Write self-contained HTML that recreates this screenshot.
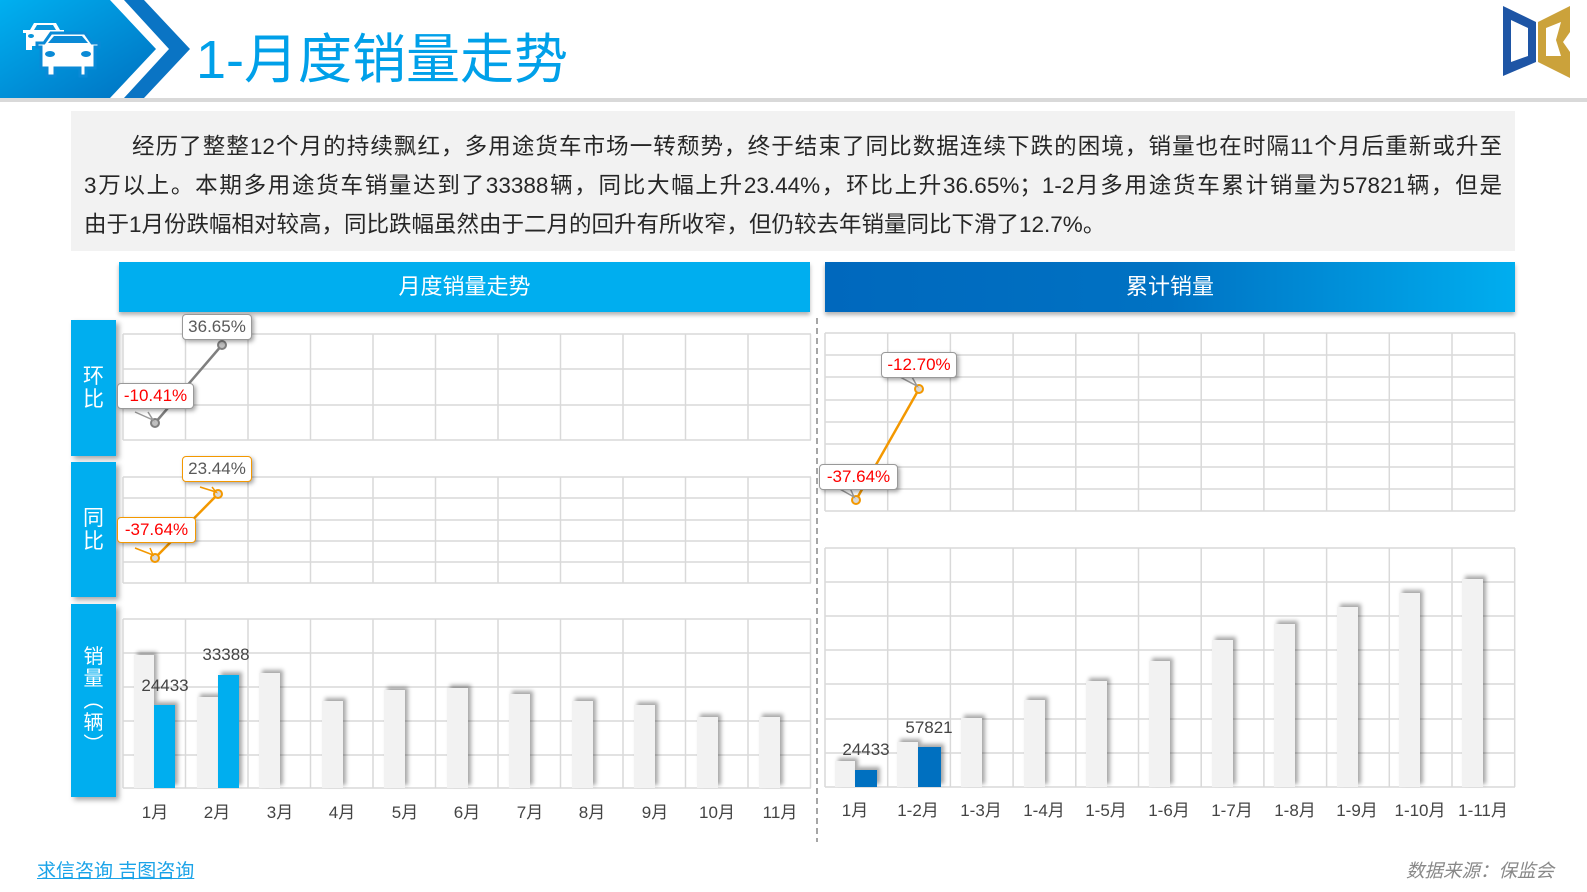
<!DOCTYPE html>
<html><head><meta charset="utf-8"><style>
*{margin:0;padding:0;box-sizing:border-box}
body{width:1587px;height:892px;background:#fff;position:relative;overflow:hidden;font-family:"Liberation Sans","Noto Sans CJK SC",sans-serif}
.a{position:absolute}
.para{position:absolute;left:71px;top:111px;width:1444px;height:140px;background:#f2f2f2}
.ln{position:absolute;font-size:22.5px;color:#262626;white-space:nowrap;line-height:30px}
.j{text-align:justify;text-align-last:justify}
.hd{position:absolute;top:262px;height:50px;color:#fff;font-size:22px;line-height:50px;text-align:center;box-shadow:0 3px 4px rgba(0,0,0,.3)}
.sb{position:absolute;left:71px;width:45px;background:#00aeef;color:#fff;font-size:21px;line-height:23px;text-align:center;box-shadow:3px 3px 5px rgba(0,0,0,.35);display:flex;align-items:center;justify-content:center}
.bar{position:absolute;box-shadow:3px -3px 4px rgba(0,0,0,.35)}
.g{background:#f2f2f2}
.lbl{position:absolute;font-size:17px;color:#444;transform:translateX(-50%);white-space:nowrap}
.co{position:absolute;background:#fff;border:1.5px solid #999;border-radius:4px;font-size:17px;line-height:24px;text-align:center;box-shadow:2px 2px 4px rgba(0,0,0,.35)}
</style></head><body>
<svg class="a" style="left:0;top:0" width="1587" height="105">
<defs><linearGradient id="hg" x1="0" y1="0" x2="1" y2="1"><stop offset="0" stop-color="#00b0f0"/><stop offset="1" stop-color="#0070c0"/></linearGradient></defs>
<rect x="0" y="98" width="1587" height="4" fill="#d9d9d9"/>
<polygon points="0,0 110,0 156,49 110,98 0,98" fill="url(#hg)"/>
<polygon points="124,0 144,0 190,49 144,98 124,98 169,49" fill="#0a74c4"/>
<!-- back car -->
<g fill="#fff">
<path d="M30,30 L34,23 H56 L60,30 H64 V33 H61 V50 H55 V46 H32 V50 H26 V33 H23 V30Z"/>
<path d="M34,30 L37,25 H53 L56,30Z" fill="#0994da"/>
<ellipse cx="31" cy="36" rx="3" ry="2" fill="#0994da"/>
</g>
<!-- front car -->
<g fill="#fff">
<path d="M44,43 L51,33 H85 L92,43 H99 V47 H95 V68 H86 V76 H80 V68 H55 V76 H47 V68 H41 V47 H37 V43Z" stroke="#0a8ad6" stroke-width="3"/>
<path d="M48,43 L54,36 H82 L88,43Z" fill="#0a8ad6"/>
<ellipse cx="50" cy="54" rx="5" ry="3" fill="#0a8ad6"/><ellipse cx="86" cy="54" rx="5" ry="3" fill="#0a8ad6"/>
</g>
<text x="196" y="78" font-size="54" fill="#00a0e9" font-family="Liberation Sans,Noto Sans CJK SC,sans-serif">1-月度销量走势</text>
<path d="M1503,6 L1536,22 L1536,62 L1503,76Z M1511,20 L1511,62 L1528,56 L1528,28Z" fill="#1e55a5" fill-rule="evenodd"/>
<path d="M1570,6 L1538,22 L1538,62 L1570,78 L1570,52 L1563,42 L1570,32Z M1546,28 L1561,22 L1556,40 L1561,56 L1546,56Z" fill="#cba23b" fill-rule="evenodd"/>
</svg>
<div class="para"></div>
<div class="ln j" style="left:132px;top:132px;width:1370px">经历了整整12个月的持续飘红，多用途货车市场一转颓势，终于结束了同比数据连续下跌的困境，销量也在时隔11个月后重新或升至</div>
<div class="ln j" style="left:84px;top:171px;width:1418px">3万以上。本期多用途货车销量达到了33388辆，同比大幅上升23.44%，环比上升36.65%；1-2月多用途货车累计销量为57821辆，但是</div>
<div class="ln" style="left:84px;top:210px">由于1月份跌幅相对较高，同比跌幅虽然由于二月的回升有所收窄，但仍较去年销量同比下滑了12.7%。</div>

<div class="hd" style="left:119px;width:691px;background:#00aeef">月度销量走势</div>
<div class="hd" style="left:825px;width:690px;background:linear-gradient(90deg,#0068bd,#0072c3 50%,#00aeef)">累计销量</div>

<div class="sb" style="top:320px;height:136px">环<br>比</div>
<div class="sb" style="top:462px;height:135px">同<br>比</div>
<div class="sb" style="top:604px;height:193px;font-size:20px;line-height:22px">销<br>量<br>︵<br>辆<br>︶</div>

<svg class="a" style="left:0;top:0" width="1587" height="892">
<g stroke="#d9d9d9" stroke-width="1.5" fill="none">
<path d="M123,334H811M123,369H811M123,405H811M123,440H811"/>
<path d="M123,477H811M123,498H811M123,520H811M123,541H811M123,562H811M123,583H811"/>
<path d="M123,619H811M123,653H811M123,687H811M123,721H811M123,755H811M123,788H811"/>
<path d="M123,334V440M185.5,334V440M248,334V440M310.5,334V440M373,334V440M435.5,334V440M498,334V440M560.5,334V440M623,334V440M685.5,334V440M748,334V440M810.5,334V440"/>
<path d="M123,477V583M185.5,477V583M248,477V583M310.5,477V583M373,477V583M435.5,477V583M498,477V583M560.5,477V583M623,477V583M685.5,477V583M748,477V583M810.5,477V583"/>
<path d="M123,619V788M185.5,619V788M248,619V788M310.5,619V788M373,619V788M435.5,619V788M498,619V788M560.5,619V788M623,619V788M685.5,619V788M748,619V788M810.5,619V788"/>
<path d="M825,333H1515M825,355H1515M825,377H1515M825,400H1515M825,422H1515M825,444H1515M825,467H1515M825,489H1515M825,511H1515"/>
<path d="M825,548H1515M825,582H1515M825,616H1515M825,650H1515M825,684H1515M825,719H1515M825,753H1515M825,787H1515"/>
<path d="M825,333V511M887.7,333V511M950.4,333V511M1013.1,333V511M1075.8,333V511M1138.5,333V511M1201.2,333V511M1263.9,333V511M1326.6,333V511M1389.3,333V511M1452,333V511M1514.7,333V511"/>
<path d="M825,548V787M887.7,548V787M950.4,548V787M1013.1,548V787M1075.8,548V787M1138.5,548V787M1201.2,548V787M1263.9,548V787M1326.6,548V787M1389.3,548V787M1452,548V787M1514.7,548V787"/>
</g>
<path d="M817,318V842" stroke="#a6a6a6" stroke-width="2" stroke-dasharray="6,4"/>
<path d="M155,423L222,345" stroke="#7f7f7f" stroke-width="2.5"/>
<path d="M155,558L218,494" stroke="#f39800" stroke-width="2.5"/>
<path d="M856,500L919,389" stroke="#f39800" stroke-width="2.5"/>
</svg>

<div class="bar g" style="left:134px;top:655px;width:20px;height:133px"></div>
<div class="bar" style="left:154px;top:705px;width:21px;height:83px;background:#00aeef"></div>
<div class="bar g" style="left:196.5px;top:697px;width:21px;height:91px"></div>
<div class="bar" style="left:217.5px;top:675px;width:21px;height:113px;background:#00aeef"></div>
<div class="bar g" style="left:259px;top:673px;width:21px;height:115px"></div>
<div class="bar g" style="left:321.5px;top:701px;width:21px;height:87px"></div>
<div class="bar g" style="left:384px;top:690px;width:21px;height:98px"></div>
<div class="bar g" style="left:446.5px;top:688px;width:21px;height:100px"></div>
<div class="bar g" style="left:509px;top:694px;width:21px;height:94px"></div>
<div class="bar g" style="left:571.5px;top:701px;width:21px;height:87px"></div>
<div class="bar g" style="left:634px;top:705px;width:21px;height:83px"></div>
<div class="bar g" style="left:696.5px;top:717px;width:21px;height:71px"></div>
<div class="bar g" style="left:759px;top:717px;width:21px;height:71px"></div>
<div class="lbl" style="left:165px;top:676px">24433</div>
<div class="lbl" style="left:226px;top:645px">33388</div>

<div class="bar g" style="left:835px;top:761px;width:20px;height:26px"></div>
<div class="bar" style="left:855px;top:770px;width:22px;height:17px;background:#0070c0"></div>
<div class="bar g" style="left:897px;top:742px;width:21px;height:45px"></div>
<div class="bar" style="left:918px;top:747px;width:23px;height:40px;background:#0070c0"></div>
<div class="bar g" style="left:961px;top:718px;width:21px;height:69px"></div>
<div class="bar g" style="left:1023.5px;top:700px;width:21px;height:87px"></div>
<div class="bar g" style="left:1086px;top:681px;width:21px;height:106px"></div>
<div class="bar g" style="left:1149px;top:661px;width:21px;height:126px"></div>
<div class="bar g" style="left:1211.5px;top:640px;width:21px;height:147px"></div>
<div class="bar g" style="left:1274px;top:624px;width:21px;height:163px"></div>
<div class="bar g" style="left:1336.5px;top:607px;width:21px;height:180px"></div>
<div class="bar g" style="left:1399px;top:593px;width:21px;height:194px"></div>
<div class="bar g" style="left:1462px;top:579px;width:21px;height:208px"></div>
<div class="lbl" style="left:866px;top:740px">24433</div>
<div class="lbl" style="left:929px;top:718px">57821</div>

<div class="lbl" style="left:155px;top:798px">1月</div>
<div class="lbl" style="left:217px;top:798px">2月</div>
<div class="lbl" style="left:280px;top:798px">3月</div>
<div class="lbl" style="left:342px;top:798px">4月</div>
<div class="lbl" style="left:405px;top:798px">5月</div>
<div class="lbl" style="left:467px;top:798px">6月</div>
<div class="lbl" style="left:530px;top:798px">7月</div>
<div class="lbl" style="left:592px;top:798px">8月</div>
<div class="lbl" style="left:655px;top:798px">9月</div>
<div class="lbl" style="left:717px;top:798px">10月</div>
<div class="lbl" style="left:780px;top:798px">11月</div>
<div class="lbl" style="left:855px;top:796px">1月</div>
<div class="lbl" style="left:918px;top:796px">1-2月</div>
<div class="lbl" style="left:981px;top:796px">1-3月</div>
<div class="lbl" style="left:1044px;top:796px">1-4月</div>
<div class="lbl" style="left:1106px;top:796px">1-5月</div>
<div class="lbl" style="left:1169px;top:796px">1-6月</div>
<div class="lbl" style="left:1232px;top:796px">1-7月</div>
<div class="lbl" style="left:1295px;top:796px">1-8月</div>
<div class="lbl" style="left:1357px;top:796px">1-9月</div>
<div class="lbl" style="left:1420px;top:796px">1-10月</div>
<div class="lbl" style="left:1483px;top:796px">1-11月</div>

<svg class="a" style="left:0;top:0" width="1587" height="892">
<g stroke-width="2">
<circle cx="155" cy="423" r="4" fill="#bfbfbf" stroke="#7f7f7f"/>
<circle cx="222" cy="345" r="4" fill="#bfbfbf" stroke="#7f7f7f"/>
<circle cx="155" cy="558" r="4" fill="#d9d9d9" stroke="#f39800"/>
<circle cx="218" cy="494" r="4" fill="#d9d9d9" stroke="#f39800"/>
<circle cx="856" cy="500" r="4" fill="#d9d9d9" stroke="#f39800"/>
<circle cx="919" cy="389" r="4" fill="#d9d9d9" stroke="#f39800"/>
</g>
<g fill="#fff" stroke-width="1.5">
<path d="M135,412 L153,420 L148,412" stroke="#999"/>
<path d="M135,548 L153,555 L150,548" stroke="#f39800"/>
<path d="M200,487 L216,492 L212,487" stroke="#f39800"/>
<path d="M900,377 L917,386 L912,377" stroke="#999"/>
<path d="M838,488 L854,497 L850,488" stroke="#999"/>
</g>
</svg>
<div class="co" style="left:182px;top:314px;width:70px;color:#595959">36.65%</div>
<div class="co" style="left:117px;top:383px;width:77px;color:#ff0000">-10.41%</div>
<div class="co" style="left:182px;top:456px;width:70px;color:#595959;border-color:#f39800">23.44%</div>
<div class="co" style="left:117px;top:517px;width:79px;color:#ff0000;border-color:#f39800">-37.64%</div>
<div class="co" style="left:881px;top:352px;width:76px;color:#ff0000">-12.70%</div>
<div class="co" style="left:819px;top:464px;width:79px;color:#ff0000">-37.64%</div>

<div class="a" style="left:37px;top:856px;font-size:19px;color:#1aa3e8;text-decoration:underline;white-space:nowrap">求信咨询 吉图咨询</div>
<div class="a" style="left:1406px;top:857px;font-size:18.5px;color:#888;font-style:italic;white-space:nowrap">数据来源：保监会</div>
</body></html>
